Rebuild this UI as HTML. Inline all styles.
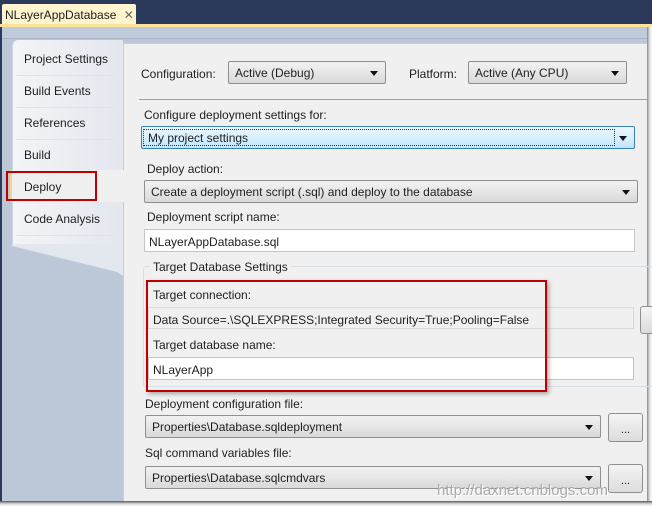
<!DOCTYPE html><html><head><style>
*{margin:0;padding:0;box-sizing:border-box}
body{width:652px;height:506px;overflow:hidden;position:relative;background:#bcc8d8;font-family:"Liberation Sans",sans-serif;font-size:12px;color:#1e1e1e}
.a{position:absolute}
.cb{position:absolute;border:1px solid #8e8f8f;border-radius:2px;background:linear-gradient(#f2f2f2,#e6e6e6 50%,#d9d9d9);padding:4px 6px 3px;white-space:nowrap}
.cb:after{content:"";position:absolute;right:7px;top:9px;border:4px solid transparent;border-top:5px solid #111;border-bottom:0}
.tb{position:absolute;border:1px solid #c5c5c5;background:#fff;padding:5px 4px 3px;white-space:nowrap}
.bt{position:absolute;border:1px solid #8e8f8f;border-radius:3px;background:linear-gradient(#f4f4f4,#dcdcdc);text-align:center;font-size:11px;padding-top:10px}
.li{position:absolute;left:24px}
.sep{position:absolute;left:16px;width:100px;height:1px;background:#dfe3ea}
</style></head><body>
<div class="a" style="left:0;top:0;width:652px;height:27px;background:#2b3a5b"></div>
<div class="a" style="left:2px;top:4px;width:134px;height:23px;background:#fef5cf;border-radius:2px 2px 0 0;padding:4px 3px;font-size:12px;white-space:nowrap">NLayerAppDatabase <span style="color:#666;margin-left:4px">✕</span></div>
<div class="a" style="left:0;top:24px;width:652px;height:3px;background:#fbe39b"></div>
<div class="a" style="left:0;top:27px;width:652px;height:475px;border-left:2px solid #2b3a5b;background:#bcc8d8"></div>
<div class="a" style="left:2px;top:27px;width:645px;height:12px;background:#bfcbdb;border-bottom:1px solid #a9b5c6"></div>
<div class="a" style="left:12px;top:40px;width:111px;height:205px;background:linear-gradient(90deg,#f3f4f7,#e3e7ee);border-radius:6px 0 0 0;border-left:1px solid #d0d6e0"></div>
<svg class="a" style="left:12px;top:244px" width="111" height="40"><path d="M0 0 L0 2 L105 28 L111 32 L111 0Z" fill="#e3e7ee"/></svg>
<div class="li" style="top:52px">Project Settings</div><div class="sep" style="top:75px"></div>
<div class="li" style="top:84px">Build Events</div><div class="sep" style="top:107px"></div>
<div class="li" style="top:116px">References</div><div class="sep" style="top:139px"></div>
<div class="li" style="top:148px">Build</div>
<div class="a" style="left:10px;top:170px;width:115px;height:32px;background:#f0f0f0;border-left:2px solid #f2d98a"></div>
<div class="li" style="top:180px">Deploy</div>
<div class="li" style="top:212px">Code Analysis</div><div class="sep" style="top:235px"></div>
<div class="a" style="left:6px;top:171px;width:91px;height:30px;border:2px solid #c00000"></div>
<div class="a" style="left:123px;top:43px;width:524px;height:459px;background:#f0f0f0;border-left:1px solid #c9ced6"></div>
<div class="a" style="left:123px;top:43px;width:524px;height:1px;background:#c9ced6"></div>
<div class="a" style="left:123px;top:170px;width:2px;height:32px;background:#f0f0f0"></div>
<div class="a" style="left:647px;top:27px;width:5px;height:479px;background:linear-gradient(90deg,#888,#ddd,#fff)"></div>
<div class="a" style="left:0;top:501px;width:652px;height:5px;background:linear-gradient(#555,#ccc,#fff)"></div>
<div class="a" style="left:141px;top:67px">Configuration:</div>
<div class="cb" style="left:228px;top:61px;width:158px;height:23px">Active (Debug)</div>
<div class="a" style="left:409px;top:67px">Platform:</div>
<div class="cb" style="left:468px;top:61px;width:159px;height:23px">Active (Any CPU)</div>
<div class="a" style="left:139px;top:99px;width:508px;height:1px;background:#a0a0a0"></div>
<div class="a" style="left:144px;top:108px">Configure deployment settings for:</div>
<div class="cb" style="left:141px;top:126px;width:494px;height:23px;border-color:#3c7fb1;background:linear-gradient(#eaf6fd,#d9f0fc 50%,#bee6fd)"><span>My project settings</span></div>
<div class="a" style="left:143px;top:129px;width:472px;height:17px;border:1px dotted #333"></div>
<div class="a" style="left:147px;top:162px">Deploy action:</div>
<div class="cb" style="left:144px;top:180px;width:494px;height:23px">Create a deployment script (.sql) and deploy to the database</div>
<div class="a" style="left:147px;top:210px">Deployment script name:</div>
<div class="tb" style="left:144px;top:229px;width:491px;height:23px">NLayerAppDatabase.sql</div>
<div class="a" style="left:143px;top:266px;width:510px;height:121px;border:1px solid #d5dfe5;border-radius:3px"></div>
<div class="a" style="left:150px;top:260px;background:#f0f0f0;padding:0 3px">Target Database Settings</div>
<div class="a" style="left:153px;top:288px">Target connection:</div>
<div class="tb" style="left:148px;top:307px;width:486px;height:22px;background:#f0f0f0;border-color:#dadada">Data Source=.\SQLEXPRESS;Integrated Security=True;Pooling=False</div>
<div class="bt" style="left:640px;top:306px;width:20px;height:28px"></div>
<div class="a" style="left:153px;top:338px">Target database name:</div>
<div class="tb" style="left:148px;top:357px;width:486px;height:23px">NLayerApp</div>
<div class="a" style="left:146px;top:280px;width:401px;height:112px;border:2px solid #c00000;box-shadow:2px 2px 4px rgba(0,0,0,.3)"></div>
<div class="a" style="left:145px;top:397px">Deployment configuration file:</div>
<div class="cb" style="left:145px;top:415px;width:456px;height:23px">Properties\Database.sqldeployment</div>
<div class="bt" style="left:608px;top:413px;width:35px;height:29px">...</div>
<div class="a" style="left:145px;top:446px">Sql command variables file:</div>
<div class="cb" style="left:145px;top:466px;width:456px;height:23px">Properties\Database.sqlcmdvars</div>
<div class="bt" style="left:608px;top:464px;width:35px;height:29px">...</div>
<div class="a" style="left:437px;top:482px;font-size:15px;color:#aaa;text-shadow:1px 1px 0 #fff">http://daxnet.cnblogs.com</div>
</body></html>
